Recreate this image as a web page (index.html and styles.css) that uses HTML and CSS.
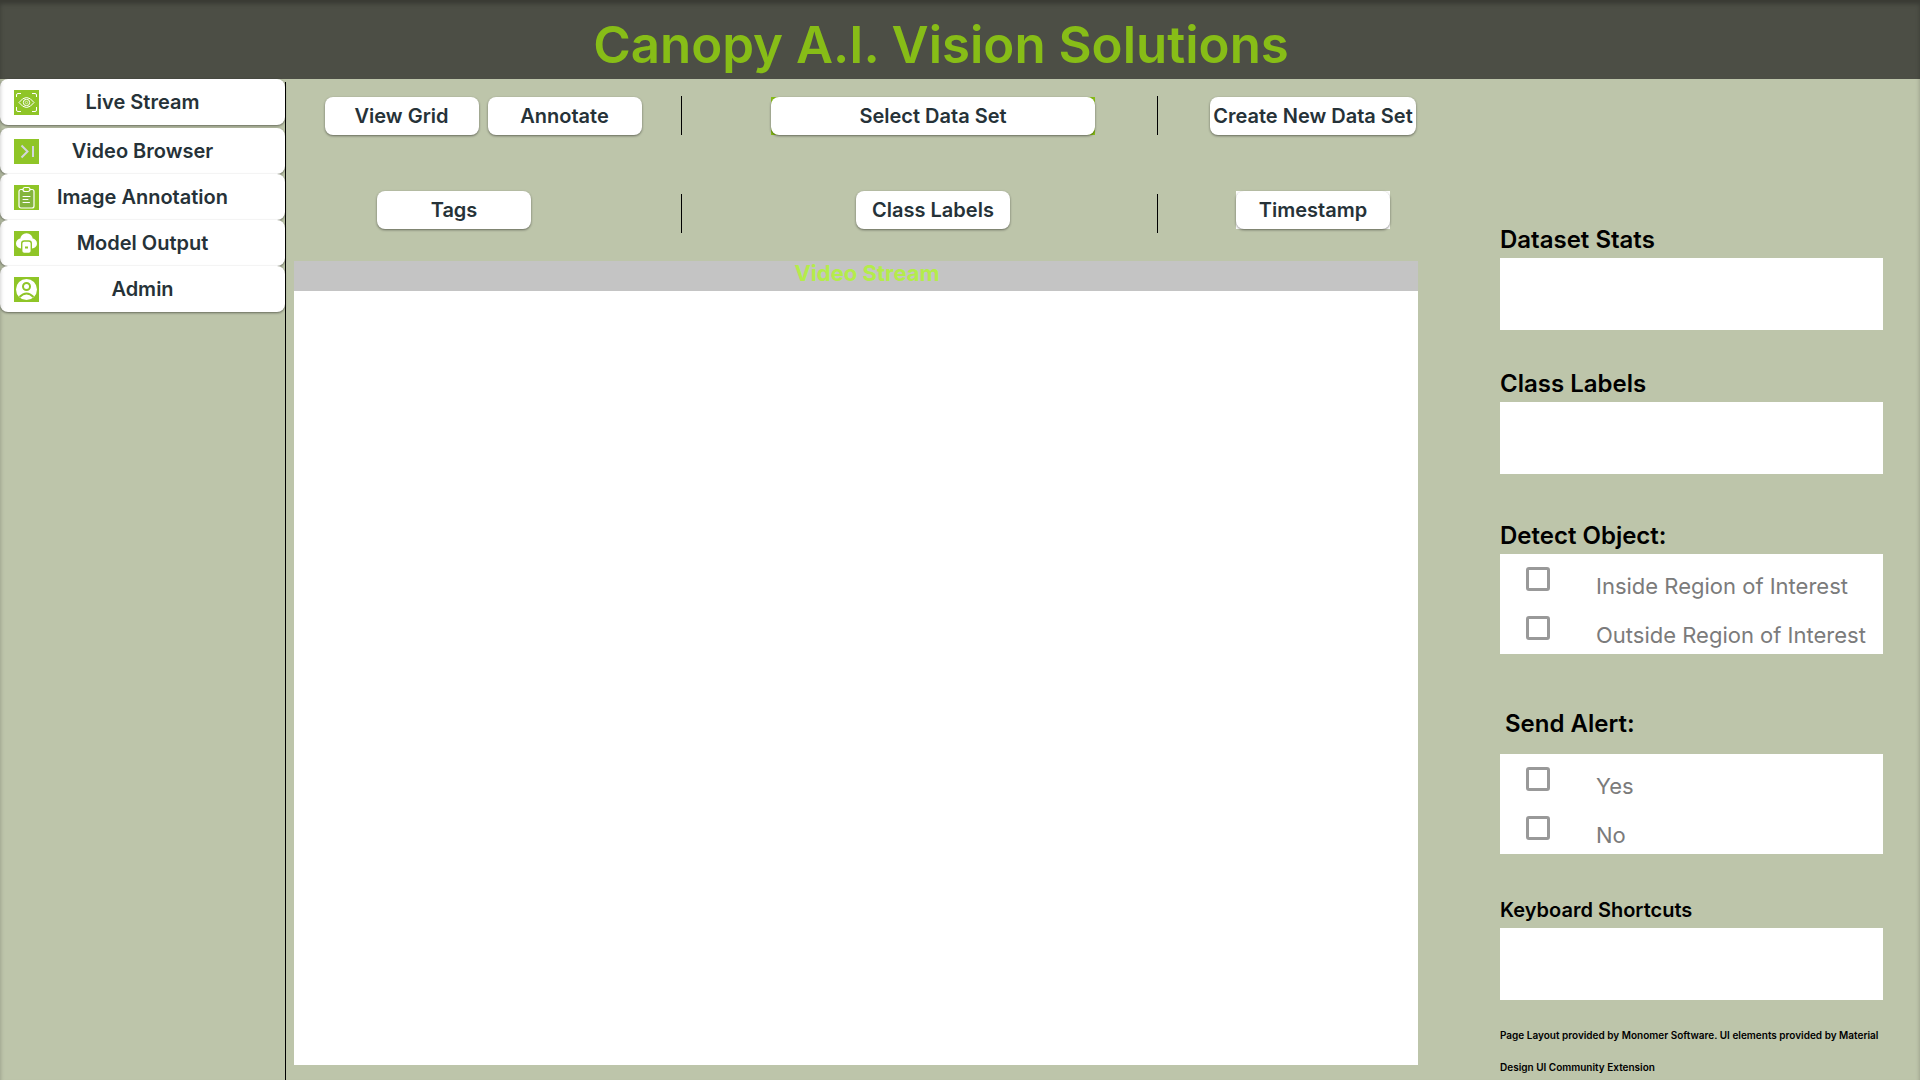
FILE: index.html
```html
<!DOCTYPE html>
<html lang="en">
<head>
  <meta charset="utf-8">
  <meta name="viewport" content="width=device-width, initial-scale=1">
  <title>Canopy A.I. Vision Solutions</title>
  <link rel="stylesheet" href="styles.css">
</head>
<body>
  <header class="banner">
    <h1 class="banner-title">Canopy A.I. Vision Solutions</h1>
  </header>

  <div class="layout">
    <nav class="sidebar" aria-label="Main">
      <a class="nav-link nav-link-current" href="#live">
        <svg class="nav-icon" viewBox="0 0 25 25" fill="none" stroke="#fff" aria-hidden="true">
          <path d="M2.5 7V5Q2.5 3.500 4 3.500H7M18 3.500H21Q22.500 3.500 22.500 5V7M22.500 17V20Q22.500 21.500 21 21.500H18M7 21.500H4Q2.500 21.500 2.500 20V17"/>
          <path d="M5 12.500Q12.500 2.500 20 12.500Q12.500 22.500 5 12.500Z"/>
          <circle cx="12.500" cy="12.500" r="3.200"/><circle cx="12.500" cy="12.500" r="1.200" stroke-width=".6"/>
        </svg>
        <span class="nav-text">Live Stream</span>
      </a>
      <a class="nav-link" href="#video">
        <svg class="nav-icon" viewBox="0 0 25 25" fill="none" stroke="#d3d6dc" stroke-width="2" aria-hidden="true">
          <path d="M7.500 6.500 13.500 12.500 7.500 18.500M19 7V18"/>
        </svg>
        <span class="nav-text">Video Browser</span>
      </a>
      <a class="nav-link" href="#annotation">
        <svg class="nav-icon" viewBox="0 0 25 25" fill="none" stroke="#fff" stroke-linecap="round" aria-hidden="true">
          <rect x="5" y="4.500" width="15" height="18.500" rx="2" fill="#84b53e" stroke-width="1.200"/>
          <rect x="9" y="2.500" width="7" height="4" rx="2" fill="#8fc527" stroke-width="1.200"/>
          <path d="M9 11.500H16M9 14.500H14M9 17.500H15.500"/>
        </svg>
        <span class="nav-text">Image Annotation</span>
      </a>
      <a class="nav-link" href="#model">
        <svg class="nav-icon" viewBox="0 0 25 25" fill="#fff" aria-hidden="true">
          <circle cx="12.500" cy="8.500" r="6.300"/><circle cx="7" cy="12.500" r="5"/><circle cx="18" cy="12.500" r="5"/>
          <rect x="7.700" y="10" width="9.600" height="12.500" rx="2.500" stroke="#8fc527" stroke-width="1.400"/>
          <rect x="11" y="15.500" width="3" height="2" fill="#8fc527"/>
        </svg>
        <span class="nav-text">Model Output</span>
      </a>
      <a class="nav-link" href="#admin">
        <svg class="nav-icon" viewBox="0 0 25 25" aria-hidden="true">
          <circle cx="12.500" cy="12.500" r="10.500" fill="#fff"/>
          <g fill="none" stroke="#8fc527" stroke-width="2"><circle cx="12.500" cy="9.500" r="3.500"/><path d="M5.500 20Q12.500 13 19.500 20"/></g>
        </svg>
        <span class="nav-text">Admin</span>
      </a>
    </nav>

    <main class="workspace">
      <div class="toolbar toolbar-top">
        <div class="tools tools-start">
          <button class="tool" type="button">View Grid</button>
          <button class="tool" type="button">Annotate</button>
        </div>
        <div class="divider"></div>
        <div class="tools tools-middle">
          <div class="backing backing-green"><button class="tool tool-wide" type="button">Select Data Set</button></div>
        </div>
        <div class="divider"></div>
        <div class="tools tools-end">
          <button class="tool tool-medium" type="button">Create New Data Set</button>
        </div>
      </div>
      <div class="toolbar toolbar-filters">
        <div class="tools tools-tags">
          <button class="tool" type="button">Tags</button>
        </div>
        <div class="divider"></div>
        <div class="tools tools-middle">
          <button class="tool" type="button">Class Labels</button>
        </div>
        <div class="divider"></div>
        <div class="tools tools-end">
          <div class="backing backing-white"><button class="tool" type="button">Timestamp</button></div>
        </div>
      </div>
      <section class="stream">
        <h2 class="stream-title">Video Stream</h2>
        <div class="stream-view"></div>
      </section>
    </main>

    <aside class="details">
      <section class="block-stats">
        <h2 class="block-title">Dataset Stats</h2>
        <div class="panel"></div>
      </section>
      <section class="block-labels">
        <h2 class="block-title">Class Labels</h2>
        <div class="panel"></div>
      </section>
      <section class="block-detect">
        <h2 class="block-title">Detect Object:</h2>
        <div class="panel panel-options">
          <label class="option"><input class="tick" type="checkbox"><span>Inside Region of Interest</span></label>
          <label class="option"><input class="tick" type="checkbox"><span>Outside Region of Interest</span></label>
        </div>
      </section>
      <section class="block-alert">
        <h2 class="block-title block-title-spaced">Send Alert:</h2>
        <div class="panel panel-options">
          <label class="option"><input class="tick" type="checkbox"><span>Yes</span></label>
          <label class="option"><input class="tick" type="checkbox"><span>No</span></label>
        </div>
      </section>
      <section class="block-keys">
        <h2 class="block-title block-title-small">Keyboard Shortcuts</h2>
        <div class="panel"></div>
      </section>
      <p class="credits">
        <span>Page Layout provided by Monomer Software. UI elements provided by Material</span>
        <span>Design UI Community Extension</span>
      </p>
    </aside>
  </div>
</body>
</html>
```
FILE: styles.css
```css
* {
  box-sizing: border-box;
}

body {
  position: relative;
  display: flex;
  flex-direction: column;
  min-height: 100vh;
  margin: 0;
  background: #bdc5aa;
  color: #000;
  font-family: Inter, "Liberation Sans", sans-serif;
}

/* Soft inner shadow round the whole page */
body::after {
  content: "";
  position: absolute;
  inset: 0;
  box-shadow: inset 0 4px 4px rgba(0, 0, 0, 0.25);
  pointer-events: none;
}

h1,
h2,
p {
  margin: 0;
}

.banner {
  padding: 10px 38px 0 0;
  background: #4c4e45;
}

.banner-title {
  color: #87bd17;
  font-size: 51px;
  font-weight: 600;
  line-height: 69px;
  text-align: center;
}

.layout {
  display: flex;
  flex: 1;
}

/* Sidebar */
.sidebar {
  flex: 0 0 286px;
  padding-right: 1px;
  background: linear-gradient(#000, #000) right 3px / 1px 100% no-repeat;
}

.nav-link {
  display: grid;
  align-items: center;
  height: 46px;
  padding: 0 14px;
  border-radius: 8px;
  background: #fff;
  box-shadow: 0 1px 3px rgba(0, 0, 0, 0.2), 0 1px 2px rgba(0, 0, 0, 0.3);
  color: #263238;
  font-size: 20px;
  font-weight: 600;
  line-height: 24px;
  text-decoration: none;
}

.nav-link-current {
  margin-bottom: 3px;
}

.nav-icon {
  grid-area: 1 / 1;
  width: 25px;
  height: 25px;
  background: #8fc527;
}

.nav-text {
  grid-area: 1 / 1;
  justify-self: center;
}

/* Workspace */
.workspace {
  display: flex;
  flex: 1;
  flex-direction: column;
  padding: 17px 0 15px 8px;
}

.toolbar {
  display: grid;
  grid-template-columns: 387fr 1px 475fr 1px 260fr;
}

.toolbar-top {
  align-items: end;
  margin-bottom: 56px;
}

.toolbar-filters {
  align-items: start;
  height: 42px;
  margin-bottom: 28px;
}

.tools {
  display: flex;
  justify-content: center;
  gap: 9px;
}

.tools-start {
  padding-right: 9px;
}

.tools-tags {
  padding-right: 67px;
}

.tools-middle {
  padding-left: 27px;
}

.tools-end {
  padding-left: 50px;
}

.divider {
  align-self: end;
  height: 39px;
  background: #000;
}

.tool {
  display: block;
  width: 154px;
  height: 38px;
  padding: 0;
  border: 0;
  border-radius: 8px;
  background: #fff;
  box-shadow: 0 1px 3px rgba(0, 0, 0, 0.2), 0 1px 2px rgba(0, 0, 0, 0.3);
  color: #263238;
  font-family: inherit;
  font-size: 20px;
  font-weight: 600;
  line-height: 24px;
  white-space: nowrap;
}

.tool-wide {
  width: 324px;
}

.tool-medium {
  width: 206px;
}

.backing-green {
  background: #87bd17;
}

.backing-white {
  background: #fff;
}

.stream {
  display: flex;
  flex: 1;
  flex-direction: column;
  background: #c4c4c4;
}

.stream-title {
  height: 30px;
  padding-left: 22px;
  color: #b4ec4b;
  font-size: 22px;
  font-weight: 700;
  line-height: 24px;
  text-align: center;
}

.stream-view {
  flex: 1;
  background: #fff;
}

/* Details column */
.details {
  flex: 0 0 502px;
  padding: 145px 37px 0 82px;
}

.block-stats {
  margin-bottom: 38px;
}

.block-labels {
  margin-bottom: 46px;
}

.block-detect {
  margin-bottom: 54px;
}

.block-alert {
  margin-bottom: 40px;
}

.block-keys {
  margin-bottom: 29px;
}

.block-title {
  margin-bottom: 2px;
  font-size: 24px;
  font-weight: 600;
  line-height: 32px;
}

.block-title-spaced {
  margin-bottom: 14px;
  padding-left: 5px;
}

.block-title-small {
  font-size: 20px;
}

.panel {
  min-height: 72px;
  background: #fff;
}

.panel-options {
  display: flex;
  flex-direction: column;
  gap: 11px;
  padding: 13px 0 0 26px;
}

.option {
  display: flex;
  align-items: flex-start;
  gap: 46px;
  color: #7b7b7b;
  font-size: 22px;
  line-height: 38px;
  white-space: nowrap;
}

.tick {
  appearance: none;
  width: 24px;
  height: 24px;
  margin: 0;
  border: 3px solid #999;
  border-radius: 3px;
}

.tick:checked {
  background: #8fc527;
}

.credits {
  display: flex;
  flex-direction: column;
  gap: 20px;
  font-size: 10px;
  font-weight: 600;
  line-height: 12px;
  white-space: nowrap;
}
```
